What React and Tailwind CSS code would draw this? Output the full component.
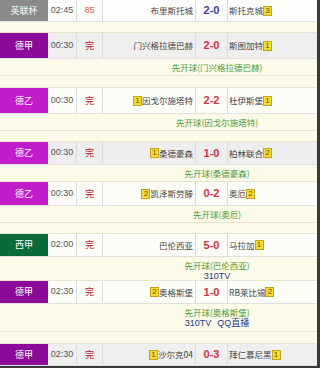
import React from 'react';

const matches = [
  { league: '英联杯', lg: 'bg-[#8a8a8a]', time: '02:45', status: '85', statusCls: 'text-[#e0603a]', home: '布里斯托城', score: '2-0', scoreCls: 'text-[#3a3a9a]', away: '斯托克城', awayBadge: 3, rowH: 'h-[22px]', rowBg: 'bg-[#fdfdfb]', infoH: 'h-[11px]', lines: [] },
  { league: '德甲', lg: 'bg-[#8c0a98]', time: '00:30', status: '完', home: '门兴格拉德巴赫', score: '2-0', away: '斯图加特', awayBadge: 1, rowH: 'h-[26px]', rowBg: 'bg-[#efefef]', infoH: 'h-[29px]', lines: ['先开球(门兴格拉德巴赫)'], divider: true },
  { league: '德乙', lg: 'bg-[#c21bcb]', time: '00:30', status: '完', homeBadge: 1, home: '因戈尔施塔特', score: '2-2', away: '杜伊斯堡', awayBadge: 1, rowH: 'h-[26px]', rowBg: 'bg-[#fdfdf8]', infoH: 'h-[28px]', lines: ['先开球(因戈尔施塔特)'], divider: true },
  { league: '德乙', lg: 'bg-[#c21bcb]', time: '00:30', status: '完', homeBadge: 1, home: '桑德豪森', score: '1-0', away: '柏林联合', awayBadge: 2, rowH: 'h-[23px]', rowBg: 'bg-[#eeeeee]', infoH: 'h-[17px]', lines: ['先开球(桑德豪森)'] },
  { league: '德乙', lg: 'bg-[#c21bcb]', time: '00:30', status: '完', homeBadge: 2, home: '凯泽斯劳滕', score: '0-2', away: '奥厄', awayBadge: 2, rowH: 'h-[24px]', rowBg: 'bg-[#fdfdf8]', infoH: 'h-[28px]', lines: ['先开球(奥厄)'], divider: true },
  { league: '西甲', lg: 'bg-[#0b6a3b]', time: '02:00', status: '完', home: '巴伦西亚', score: '5-0', away: '马拉加', awayBadge: 1, rowH: 'h-[23px]', rowBg: 'bg-[#fdfdf8]', infoH: 'h-[24px]', lines: ['先开球(巴伦西亚)'], tv: ['310TV'] },
  { league: '德甲', lg: 'bg-[#8c0a98]', time: '02:30', status: '完', homeBadge: 2, home: '奥格斯堡', score: '1-0', away: 'RB莱比锡', awayBadge: 2, rowH: 'h-[23px]', rowBg: 'bg-[#fdfdf8]', infoH: 'h-[40px]', lines: ['先开球(奥格斯堡)'], tv: ['310TV', 'QQ直播'], divider: true },
  { league: '德甲', lg: 'bg-[#8c0a98]', time: '02:30', status: '完', homeBadge: 1, home: '沙尔克04', score: '0-3', away: '拜仁慕尼黑', awayBadge: 1, rowH: 'h-[22px]', rowBg: 'bg-[#efefef]', infoH: '', lines: [] },
];

const cjk = "font-['Noto_Sans_CJK_SC',sans-serif]";

function Badge({ n }) {
  return (
    <span className="inline-flex items-center justify-center w-[9px] h-[10px] bg-[#f6dc2e] border border-[#c8a31a] font-['Liberation_Sans',sans-serif] text-[8px] leading-none text-[#6b4a00]">
      {n}
    </span>
  );
}

function MatchRow({ m }) {
  return (
    <div className={`flex ${m.rowH} ${m.rowBg} border-b border-[#e0e0e0] text-[9px]`}>
      <div className={`w-[48px] flex items-center justify-center text-white text-[9px] ${cjk} ${m.lg}`}>{m.league}</div>
      <div className="w-[29px] flex items-center justify-center text-[#555] border-r border-[#dcdcdc]">{m.time}</div>
      <div className={`w-[26px] flex items-center justify-center border-r border-[#dcdcdc] ${m.statusCls || 'text-[#b01828]'}`}>
        <span className={m.status === '完' ? `${cjk} text-[9px]` : ''}>{m.status}</span>
      </div>
      <div className="w-[93px] flex items-center justify-end pr-[2px] text-[#444] border-r border-[#dcdcdc]">
        {m.homeBadge && <Badge n={m.homeBadge} />}
        <span className={`${cjk} text-[8.5px]`}>{m.home}</span>
      </div>
      <div className={`w-[32px] flex items-center justify-center font-bold text-[11px] border-r border-[#dcdcdc] ${m.scoreCls || 'text-[#cc3344]'}`}>{m.score}</div>
      <div className="flex-1 flex items-center pl-[1px] text-[#444]">
        <span className={`${cjk} text-[8.5px]`}>{m.away}</span>
        {m.awayBadge && <Badge n={m.awayBadge} />}
      </div>
    </div>
  );
}

function InfoRow({ m }) {
  if (!m.infoH) return null;
  return (
    <div className={`flex flex-col ${m.infoH} bg-[#fcfbe9] border-b border-[#e6e3d0]`}>
      {m.lines.length > 0 && (
        <div className={`flex flex-col pt-[3px] pb-[2px] ${m.divider ? 'border-b border-[#e8e5d2]' : ''}`}>
          {m.lines.map((l) => (
            <div key={l} className={`ml-[103px] w-[228px] text-center text-[8.5px] leading-[11px] text-[#4a9a3a] ${cjk}`}>{l}</div>
          ))}
          {m.tv && (
            <div className="ml-[103px] w-[228px] flex justify-center gap-[6px] text-[9px] leading-[11px] text-[#2c3a8c]">
              {m.tv.map((t) => <span key={t}>{t}</span>)}
            </div>
          )}
        </div>
      )}
    </div>
  );
}

export default function App() {
  return (
    <div className="w-[320px] h-[368px] overflow-hidden bg-[#fcfbe9] border-r-[3px] border-b-2 border-[#3a3a3a] font-['Liberation_Sans','Noto_Sans_CJK_SC',sans-serif]">
      {matches.map((m, i) => (
        <React.Fragment key={i}>
          <MatchRow m={m} />
          <InfoRow m={m} />
        </React.Fragment>
      ))}
    </div>
  );
}
